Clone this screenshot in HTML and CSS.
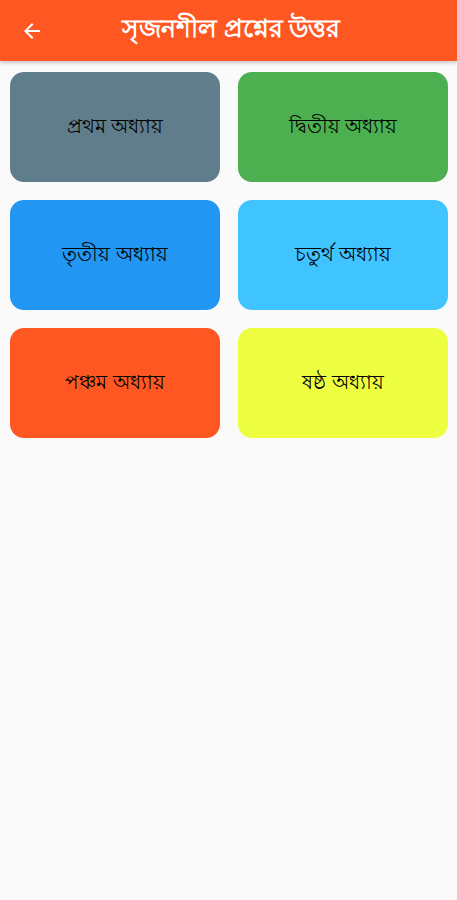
FILE: index.html
```html
<!DOCTYPE html>
<html lang="bn">

<head>
    <meta charset="UTF-8">
    <meta name="viewport" content="width=device-width, initial-scale=1.0">
    <title>সৃজনশীল প্রশ্নের উত্তর</title>
    <link rel="stylesheet" href="styles.css">
</head>

<body>
    <div class="bar">
        <a href="javascript:;" class="back">
            <svg width="24" height="24" viewBox="0 0 24 24">
                <path d="M20 11H7.83l5.59-5.59L12 4l-8 8 8 8 1.41-1.41L7.83 13H20v-2z" fill="#fff" />
            </svg>
        </a>
        <h1>সৃজনশীল প্রশ্নের উত্তর</h1>
    </div>
    <ul class="list">
        <li class="c1"><a href="#">প্রথম অধ্যায়</a></li>
        <li class="c2"><a href="#">দ্বিতীয় অধ্যায়</a></li>
        <li class="c3"><a href="#">তৃতীয় অধ্যায়</a></li>
        <li class="c4"><a href="#">চতুর্থ অধ্যায়</a></li>
        <li class="c5"><a href="#">পঞ্চম অধ্যায়</a></li>
        <li class="c6"><a href="#">ষষ্ঠ অধ্যায়</a></li>
    </ul>
</body>

</html>
```

FILE: styles.css
```css
body {
    padding: 0;
    margin: 0;
    background-color: #fafafa;
    font-family: "Noto Sans", "DejaVu Sans", sans-serif;
}

.bar {
    display: flex;
    align-items: center;
    height: 61px;
    background-color: #ff5722;
    box-shadow: 0 2px 4px rgba(0, 0, 0, .2);
}

.back {
    display: flex;
    width: 24px;
    height: 24px;
    margin-left: 20px;
}

.bar h1 {
    margin: 0 0 0 78px;
    font-size: 25px;
    font-weight: bold;
    color: white;
}

.list {
    display: grid;
    grid-template-columns: 1fr 1fr;
    gap: 18px;
    padding: 0 9px 0 10px;
    margin: 11px 0 0;
    list-style-type: none;
}

.list li {
    height: 110px;
    border-radius: 14px;
}

.list a {
    display: flex;
    align-items: center;
    justify-content: center;
    height: 100%;
    font-size: 20px;
    color: #000;
    text-decoration: none;
}

.c1 {
    background-color: #607d8b;
}

.c2 {
    background-color: #4caf50;
}

.c3 {
    background-color: #2196f3;
}

.c4 {
    background-color: #40c4ff;
}

.c5 {
    background-color: #ff5722;
}

.c6 {
    background-color: #eeff41;
}
```
